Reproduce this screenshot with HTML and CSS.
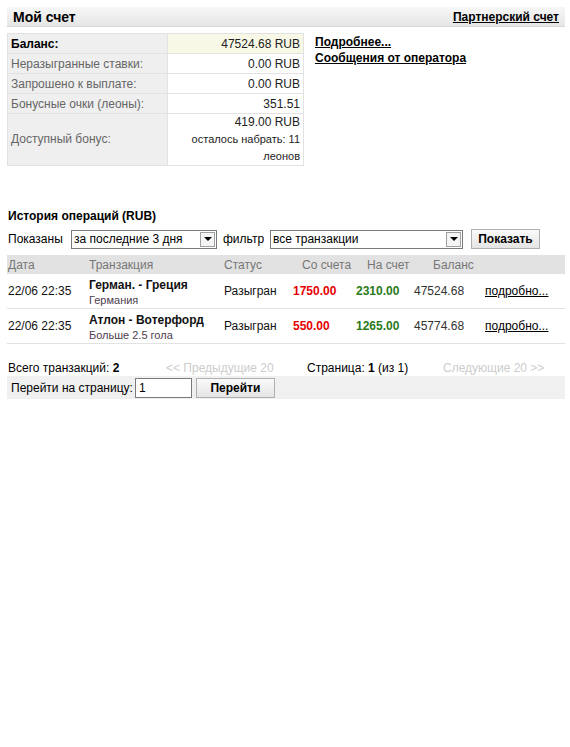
FILE: index.html
```html
<!DOCTYPE html>
<html lang="ru">
<head>
    <meta charset="UTF-8">
    <title>Мой счет</title>
    <link rel="stylesheet" href="styles.css">
</head>
<body>
    <div class="page">
        <div class="title-bar">
            <h1>Мой счет</h1>
            <a href="#" class="title-link">Партнерский счет</a>
        </div>

        <div class="summary">
            <table class="balance-table">
                <tr class="main">
                    <td class="label">Баланс:</td>
                    <td class="value">47524.68 RUB</td>
                </tr>
                <tr>
                    <td class="label">Неразыгранные ставки:</td>
                    <td class="value">0.00 RUB</td>
                </tr>
                <tr>
                    <td class="label">Запрошено к выплате:</td>
                    <td class="value">0.00 RUB</td>
                </tr>
                <tr>
                    <td class="label">Бонусные очки (леоны):</td>
                    <td class="value">351.51</td>
                </tr>
                <tr class="bonus">
                    <td class="label">Доступный бонус:</td>
                    <td class="value">419.00 RUB<br><span class="note">осталось набрать: 11<br>леонов</span></td>
                </tr>
            </table>
            <div class="side-links">
                <a href="#">Подробнее...</a>
                <a href="#">Сообщения от оператора</a>
            </div>
        </div>

        <h2 class="history-title">История операций (RUB)</h2>
        <div class="filter-row">
            <span class="lbl-shown">Показаны</span>
            <div class="select period">
                <span>за последние 3 дня</span>
                <i class="arrow"></i>
            </div>
            <span class="lbl-filter">фильтр</span>
            <div class="select kind">
                <span>все транзакции</span>
                <i class="arrow"></i>
            </div>
            <button class="btn show-btn">Показать</button>
        </div>

        <table class="history">
            <colgroup>
                <col style="width:81px">
                <col style="width:133px">
                <col style="width:69px">
                <col style="width:63px">
                <col style="width:58px">
                <col style="width:69px">
                <col>
            </colgroup>
            <thead>
                <tr>
                    <th>Дата</th>
                    <th>Транзакция</th>
                    <th class="h-status">Статус</th>
                    <th class="h-from">Со счета</th>
                    <th class="h-to">На счет</th>
                    <th class="h-bal">Баланс</th>
                    <th></th>
                </tr>
            </thead>
            <tbody>
                <tr>
                    <td>22/06 22:35</td>
                    <td><b>Герман. - Греция</b><div class="sub">Германия</div></td>
                    <td class="status">Разыгран</td>
                    <td class="amt out">1750.00</td>
                    <td class="amt in">2310.00</td>
                    <td class="amt bal">47524.68</td>
                    <td class="more"><a href="#">подробно...</a></td>
                </tr>
                <tr>
                    <td>22/06 22:35</td>
                    <td><b>Атлон - Вотерфорд</b><div class="sub">Больше 2.5 гола</div></td>
                    <td class="status">Разыгран</td>
                    <td class="amt out">550.00</td>
                    <td class="amt in">1265.00</td>
                    <td class="amt bal">45774.68</td>
                    <td class="more"><a href="#">подробно...</a></td>
                </tr>
            </tbody>
        </table>

        <div class="pager">
            <span class="total">Всего транзакций: <b>2</b></span>
            <span class="prev">&lt;&lt; Предыдущие 20</span>
            <span class="current">Страница: <b>1</b> (из 1)</span>
            <span class="next">Следующие 20 &gt;&gt;</span>
        </div>
        <div class="goto-bar">
            <span>Перейти на страницу:</span>
            <div class="page-input">1</div>
            <button class="btn goto-btn">Перейти</button>
        </div>
    </div>
</body>
</html>
```

FILE: styles.css
```css
html, body {
    margin: 0;
    background: #fff;
    font-family: "Liberation Sans", Arial, sans-serif;
    font-size: 12px;
    color: #000;
}

.page {
    width: 558px;
    padding: 7px 0 0 7px;
}

a {
    color: #000;
}

/* title */
.title-bar {
    height: 20px;
    display: flex;
    align-items: center;
    justify-content: space-between;
    background: linear-gradient(#f7f7f7, #e6e6e6);
    border-bottom: 1px solid #d8d8d8;
    box-sizing: border-box;
    padding: 0 6px 0 6px;
}

.title-bar h1 {
    margin: 0;
    font-size: 14px;
    font-weight: bold;
}

.title-link {
    font-weight: bold;
    font-size: 12px;
}

/* balance summary */
.summary {
    display: flex;
    margin-top: 6px;
}

.balance-table {
    width: 297px;
    border-collapse: collapse;
}

.balance-table td {
    border: 1px solid #e2e2e2;
    height: 19px;
    padding: 0 3px;
    line-height: 14px;
}

.balance-table .label {
    width: 153px;
    background: #efefef;
    color: #666;
}

.balance-table .value {
    text-align: right;
    color: #222;
}

.balance-table .main .label {
    color: #000;
    font-weight: bold;
}

.balance-table .main .value {
    background: #f8f8e6;
}

.balance-table .bonus td {
    height: 51px;
    line-height: 17px;
}

.balance-table .note {
    font-size: 11px;
}

.side-links {
    display: flex;
    flex-direction: column;
    margin-left: 11px;
    padding-top: 1px;
    line-height: 16px;
}

.side-links a {
    font-weight: bold;
}

/* history */
.history-title {
    margin: 43px 0 0 1px;
    font-size: 12px;
    font-weight: bold;
}

.filter-row {
    display: flex;
    align-items: center;
    margin: 6px 0 0 1px;
    height: 20px;
}

.lbl-shown {
    width: 63px;
}

.lbl-filter {
    width: 47px;
}

.select {
    height: 19px;
    box-sizing: border-box;
    border: 1px solid #7a7a7a;
    display: flex;
    align-items: center;
    justify-content: space-between;
    padding: 0 1px 0 2px;
    background: #fff;
}

.select.period {
    width: 146px;
    margin-right: 6px;
}

.select.kind {
    width: 193px;
    margin-right: 8px;
}

.select .arrow {
    width: 15px;
    height: 15px;
    box-sizing: border-box;
    border: 1px solid #a0a0a0;
    background: #f4f4f4;
    display: flex;
    align-items: center;
    justify-content: center;
}

.select .arrow::after {
    content: "";
    border-left: 4px solid transparent;
    border-right: 4px solid transparent;
    border-top: 4px solid #000;
}

.btn {
    font-family: inherit;
    font-size: 12px;
    font-weight: bold;
    color: #000;
    background: linear-gradient(#fafafa, #e4e4e4);
    border: 1px solid #b0b0b0;
    height: 20px;
    padding: 0;
}

.show-btn {
    width: 69px;
}

.history {
    width: 558px;
    border-collapse: collapse;
    table-layout: fixed;
    margin-top: 6px;
}

.history th {
    background: #e2e2e2;
    color: #777;
    font-weight: normal;
    text-align: left;
    height: 19px;
    padding: 0 1px;
}

.history th.h-status {
    padding-left: 3px;
}

.history th.h-from {
    padding-left: 12px;
}

.history th.h-to {
    padding-left: 14px;
}

.history th.h-bal {
    padding-left: 22px;
}

.history td {
    border-bottom: 1px solid #e2e2e2;
    height: 34px;
    padding: 0 1px;
    vertical-align: middle;
    color: #111;
}

.history td b {
    display: block;
    padding-top: 1px;
}

.history .sub {
    font-size: 11px;
    color: #4d3d4d;
    margin-top: 2px;
}

.history .status,
.history .amt {
    padding-left: 3px;
}

.history .out {
    color: #e60000;
    font-weight: bold;
}

.history .in {
    color: #2a7a1a;
    font-weight: bold;
}

.history .bal {
    color: #333;
}

.history .more {
    padding-left: 5px;
}

/* pager */
.pager {
    display: flex;
    margin-top: 17px;
    padding-left: 1px;
    height: 15px;
    line-height: 15px;
}

.pager .total {
    width: 158px;
}

.pager .prev {
    width: 141px;
    color: #ccc;
}

.pager .current {
    width: 136px;
}

.pager .next {
    color: #ccc;
}

.goto-bar {
    display: flex;
    align-items: center;
    background: #f0f0f0;
    height: 23px;
    padding-left: 4px;
}

.page-input {
    width: 57px;
    height: 20px;
    box-sizing: border-box;
    border: 1px solid #7a7a7a;
    background: #fff;
    margin-left: 2px;
    padding-left: 3px;
    line-height: 18px;
}

.goto-btn {
    width: 79px;
    margin-left: 4px;
}
```
